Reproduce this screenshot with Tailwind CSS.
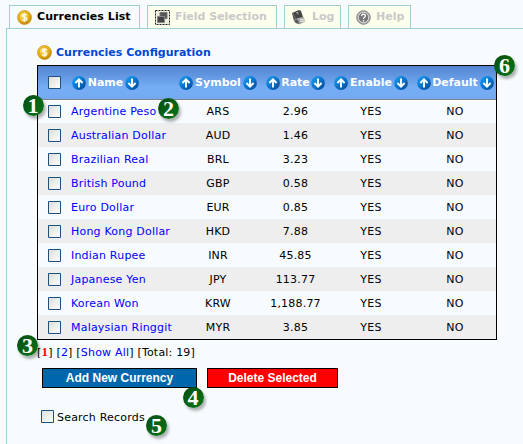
<!DOCTYPE html>
<html lang="en">
<head>
<meta charset="utf-8">
<title>Currencies</title>
<script src="https://cdn.jsdelivr.net/npm/@tailwindcss/browser@4"></script>
</head>
<body class="w-[523px] h-[444px] overflow-hidden bg-[#f7fbfd] font-['DejaVu_Sans',sans-serif] text-[11px] leading-[14px] text-black relative">
<svg class="absolute w-0 h-0" aria-hidden="true">
  <defs>
    <radialGradient id="gold" cx=".38" cy=".3" r=".75"><stop offset="0" stop-color="#ffe878"/><stop offset=".55" stop-color="#efbd20"/><stop offset="1" stop-color="#b77a00"/></radialGradient>
    <linearGradient id="blue" x2="1" y2="1"><stop offset="0" stop-color="#1da5f1"/><stop offset=".5" stop-color="#0874ce"/><stop offset="1" stop-color="#034590"/></linearGradient>
    <linearGradient id="box" x2="1" y2="1"><stop offset="0" stop-color="#dcdcd7"/><stop offset="1" stop-color="#ffffff"/></linearGradient>
    <symbol id="coin" viewBox="0 0 15 15"><circle cx="7.5" cy="7.5" r="6.9" fill="url(#gold)" stroke="#c98d0a" stroke-width=".8"/><circle cx="7.3" cy="7.2" r="5.1" fill="none" stroke="#d9a010" stroke-width=".8"/><path d="M9.7 5.2C9 4.2 5.4 4 5.4 5.8c0 1.7 4.4 1.1 4.4 3.1 0 2-3.7 1.9-4.7.7M7.5 3v9" fill="none" stroke="#fffbe0" stroke-width="1.4"/></symbol>
    <symbol id="up" viewBox="0 0 14 14"><circle cx="7" cy="7" r="6.9" fill="url(#blue)"/><path d="M7 11.4V3.5M3.4 7 7 3.4 10.6 7" fill="none" stroke="#fff" stroke-width="1.9"/></symbol>
    <symbol id="down" viewBox="0 0 14 14"><circle cx="7" cy="7" r="6.9" fill="url(#blue)"/><path d="M7 2.6v7.9M3.4 7 7 10.6 10.6 7" fill="none" stroke="#fff" stroke-width="1.9"/></symbol>
    <symbol id="check" viewBox="0 0 13 13"><path d="M.5.5h12v12H.5z" fill="url(#box)" stroke="#1c5180"/></symbol>
  </defs>
</svg>

<nav class="flex gap-[7px] h-[28px] pt-[5px] pl-[9px] font-bold text-[#c9c9c9] whitespace-nowrap">
  <div class="w-[131px] h-[23px] border border-b-0 border-[#9fcfd0] bg-[#f7fbfd] text-black flex items-center pl-[7px]"><svg class="w-[15px] h-[15px] shrink-0"><use href="#coin"/></svg><span class="ml-[5px] tracking-[0.06px]" data-w="97">Currencies List</span></div>
  <div class="w-[130px] h-[23px] border border-b-0 border-[#9fcfd0] bg-[#ffffed] flex items-center pl-[7px]"><svg class="w-[15px] h-[15px] shrink-0" viewBox="0 0 15 15"><path d="M.5.5h14v14H.5z" fill="#eeeedf" stroke="#222" stroke-dasharray="2 1"/><path d="M5 2.5h7v6H5z" fill="#555" stroke="#777"/><path d="M2.5 6.5h7v6h-7z" fill="#444" stroke="#888"/></svg><span class="ml-[5px]">Field Selection</span></div>
  <div class="w-[57px] h-[23px] border border-b-0 border-[#9fcfd0] bg-[#ffffed] flex items-center pl-[7px]"><svg class="w-[14px] h-[15px] shrink-0" viewBox="0 0 14 15"><path d="m0 3 7-3 2 1 2 6-5 3-4 1z" fill="#444"/><path d="m2 10 4-2 6-1 1 5-5 2-4-1z" fill="#aaa"/><path d="m2 11 3-2 3 5-4-1zM1 3l3 7" fill="#555" stroke="#888" stroke-width=".7"/><path d="m8 9 4 1M8 11l5 1" stroke="#eee"/><path d="m4 3 2-.6v2" fill="none" stroke="#aaa"/></svg><span class="ml-[6px]">Log</span></div>
  <div class="w-[63px] h-[23px] border border-b-0 border-[#9fcfd0] bg-[#ffffed] flex items-center pl-[7px]"><svg class="w-[15px] h-[15px] shrink-0" viewBox="0 0 15 15"><circle cx="7.5" cy="7.5" r="6.8" fill="#aaa" stroke="#888"/><circle cx="7.5" cy="7.5" r="5.2" fill="#777" stroke="#eee" stroke-width=".8"/><path d="M5.7 6c0-2.6 4-2.1 3.7 0C9.2 7.3 7.5 7.2 7.5 8.9M7.5 10v1.4" fill="none" stroke="#fff" stroke-width="1.3"/></svg><span class="ml-[5px]">Help</span></div>
</nav>

<main class="ml-[6px] h-[416px] border-t border-l border-[#9fcfd0] pl-[30px] pt-[16px]">
  <h1 class="flex items-center h-[15px] font-bold text-[#0046d5]"><svg class="w-[15px] h-[15px]"><use href="#coin"/></svg><span class="ml-[4px]">Currencies Configuration</span></h1>

  <section class="mt-[5px] w-[460px] h-[275px] border border-black">
    <div class="grid grid-cols-[33px_104px_86px_69px_82px_84px] items-center h-[33px] bg-linear-to-b from-[#5485d0] from-0% via-[#75adf5] via-65% to-[#75aaf0] text-white font-bold whitespace-nowrap">
      <svg class="w-[13px] h-[13px] ml-[10px]"><use href="#check"/></svg>
      <div class="flex items-center pl-[1px]"><svg class="w-[14px] h-[14px]"><use href="#up"/></svg><span class="w-[39px] text-center">Name</span><svg class="w-[14px] h-[14px]"><use href="#down"/></svg></div>
      <div class="flex items-center justify-center"><svg class="w-[14px] h-[14px]"><use href="#up"/></svg><span class="w-[50px] text-center">Symbol</span><svg class="w-[14px] h-[14px]"><use href="#down"/></svg></div>
      <div class="flex items-center justify-center"><svg class="w-[14px] h-[14px]"><use href="#up"/></svg><span class="w-[31px] text-center">Rate</span><svg class="w-[14px] h-[14px]"><use href="#down"/></svg></div>
      <div class="flex items-center justify-center"><svg class="w-[14px] h-[14px]"><use href="#up"/></svg><span class="w-[46px] text-center">Enable</span><svg class="w-[14px] h-[14px]"><use href="#down"/></svg></div>
      <div class="flex items-center justify-center pl-[2px]"><svg class="w-[14px] h-[14px]"><use href="#up"/></svg><span class="w-[49px] text-center">Default</span><svg class="w-[14px] h-[14px]"><use href="#down"/></svg></div>
    </div>
    <div id="rows" class="shadow-[inset_0_1px_0_#7f858c]"></div>
  </section>

  <p class="mt-[5px] h-[15px] tracking-[0.2px] whitespace-nowrap">[<b class="text-[#f00] font-['Liberation_Serif',serif] text-[13px]">1</b>] [<a class="text-[#00f]">2</a>] [<a class="text-[#00f]">Show All</a>] [Total: 19]</p>

  <div class="mt-[8px] ml-[5px] flex gap-[10px] font-['Liberation_Sans',sans-serif] font-bold text-[12px] text-white">
    <button class="w-[155px] h-[20px] border border-black bg-[#0067ac] leading-[17px]">Add New Currency</button>
    <button class="w-[131px] h-[20px] border border-black bg-[#f00] leading-[17px]">Delete Selected</button>
  </div>
  <label class="mt-[22px] ml-[4px] flex h-[15px]"><svg class="w-[13px] h-[13px]"><use href="#check"/></svg><span class="ml-[3px] mt-[1px] tracking-[0.2px]">Search Records</span></label>
</main>

<div id="badges" class="font-['Liberation_Serif',serif] font-bold text-[22px] leading-[21px] text-white text-center"></div>

<script>
const rows = [["Argentine Peso","ARS","2.96"],["Australian Dollar","AUD","1.46"],["Brazilian Real","BRL","3.23"],["British Pound","GBP","0.58"],["Euro Dollar","EUR","0.85"],["Hong Kong Dollar","HKD","7.88"],["Indian Rupee","INR","45.85"],["Japanese Yen","JPY","113.77"],["Korean Won","KRW","1,188.77"],["Malaysian Ringgit","MYR","3.85"]];
document.getElementById("rows").innerHTML = rows.map((r, i) => `<div class="grid grid-cols-[33px_104px_86px_69px_82px_84px] items-center h-[24px] text-center tracking-[0.2px] whitespace-nowrap ${i % 2 ? "bg-[#eeeeee]" : ""}"><svg class="w-[13px] h-[13px] ml-[10px] mt-[1px]"><use href="#check"/></svg><a class="text-left text-[#00f] pt-[2px]">${r[0]}</a><span class="pt-[2px]">${r[1]}</span><span class="pt-[2px]">${r[2]}</span><span class="pt-[2px]">YES</span><span class="pt-[2px] pl-[2px]">NO</span></div>`).join("");
const badges = [[33,105],[168.5,108.5],[27.5,345.5],[193,397],[156.5,425.5],[504.5,65]];
document.getElementById("badges").innerHTML = badges.map(([x, y], i) => `<div class="absolute w-[21px] h-[21px] rounded-full bg-linear-to-br from-[#064c12] to-[#087719] shadow-[2px_3px_3px_#0000004d]" style="left:${x - 10.5}px;top:${y - 10.5}px">${i + 1}</div>`).join("");
</script>
</body>
</html>
